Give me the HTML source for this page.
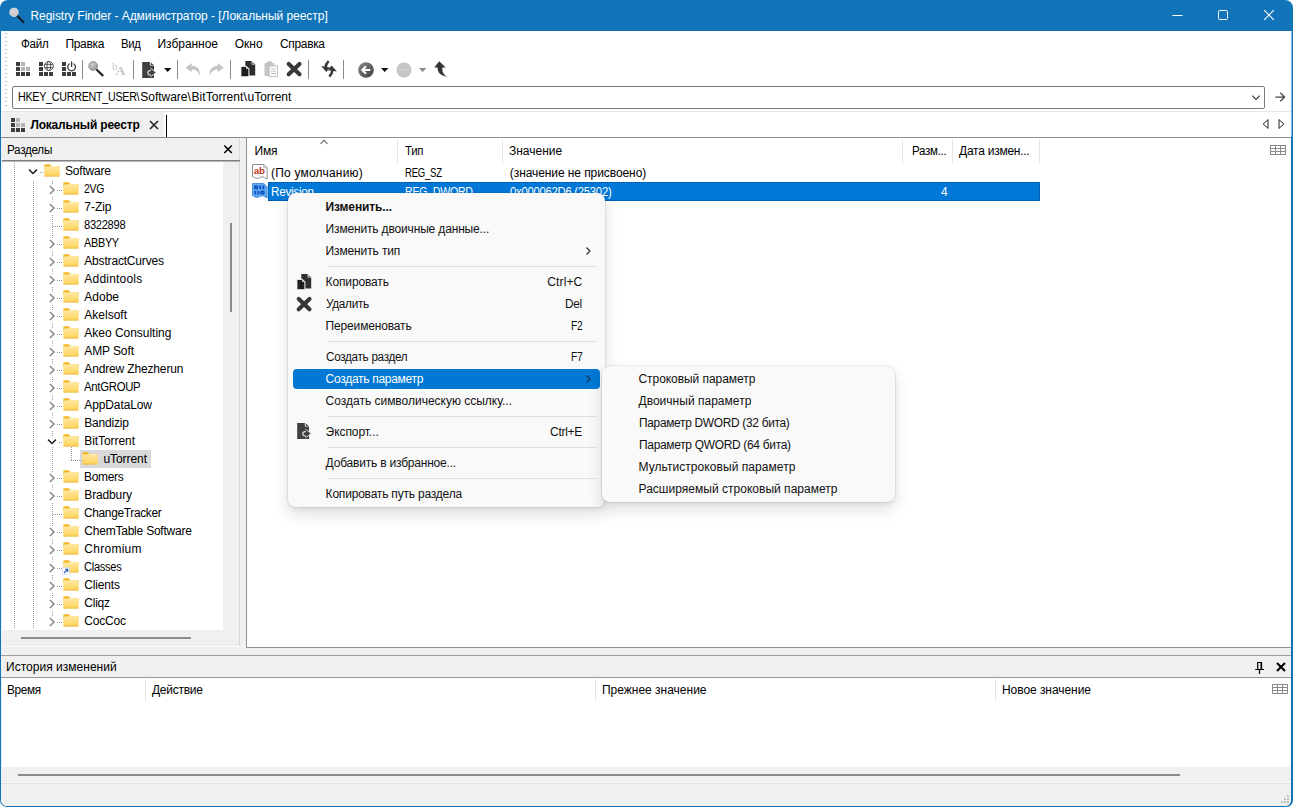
<!DOCTYPE html>
<html lang="ru"><head><meta charset="utf-8"><title>Registry Finder</title>
<style>
html,body{margin:0;padding:0;background:#fff;overflow:hidden}
#w{position:relative;width:1293px;height:807px;overflow:hidden;font-family:"Liberation Sans",sans-serif;font-size:12px;line-height:14px;color:#000}
#w div,#w svg,#w span{position:absolute;display:block}
#w span{white-space:pre;transform-origin:0 0}
#w svg{overflow:visible}
.ly{left:0;top:0;width:1293px;height:807px}
</style></head>
<body><div id="w">
<div class="ly">
<svg width="0" height="0" style="left:0;top:0"><defs><radialGradient id="gl" cx="45%" cy="40%" r="60%"><stop offset="0" stop-color="#e4dcdf"/><stop offset="1" stop-color="#c3bcc2"/></radialGradient><linearGradient id="fg" x1="0" y1="0" x2="0" y2="1"><stop offset="0" stop-color="#ffe9a6"/><stop offset="1" stop-color="#ffd257"/></linearGradient><linearGradient id="bk" x1="0" y1="0" x2="1" y2="1"><stop offset="0" stop-color="#8a8a8a"/><stop offset="1" stop-color="#3e3e3e"/></linearGradient><radialGradient id="mg" cx="40%" cy="35%" r="65%"><stop offset="0" stop-color="#cfcfcf"/><stop offset="1" stop-color="#9a9a9a"/></radialGradient><g id="fo"><path d="M0.3 1.2a1 1 0 0 1 1-1h4.6l1.6 1.9h7.4a0.8 0.8 0 0 1 .8.8v2H0.3z" fill="#f2b52a"/><path d="M0.3 3.4a0.8 0.8 0 0 1 .8-.8h4.2l1.9-.6h7.7a0.8 0.8 0 0 1 .8.8v8.9a0.8 0.8 0 0 1-.8.8H1.1a0.8 0.8 0 0 1-.8-.8z" fill="url(#fg)"/><path d="M0.5 12.1h15" stroke="#e9b94c" stroke-width="0.8"/></g></defs></svg>
<div style="left:0px;top:0px;width:1293px;height:807px;background:#1174b8;border-radius:8px 8px 7px 7px"></div>
<div style="left:1px;top:31px;width:1290px;height:775px;background:#fff;border-radius:0 0 6px 6px"></div>
<div style="left:1px;top:138px;width:1290px;height:668px;background:#f0f0f0;border-radius:0 0 6px 6px"></div>
<div style="left:1291px;top:31px;width:1px;height:106px;background:#86b6da;"></div>
<svg style="left:8px;top:7px;" width="17" height="17" viewBox="0 0 17 17"><path d="M9.5 9l6 6.2" stroke="#18222c" stroke-width="2.2" stroke-linecap="round"/><circle cx="6" cy="5.3" r="4.1" fill="url(#gl)" stroke="#eef2f6" stroke-width="0.8"/></svg>
<svg style="left:1167px;top:5px;" width="20" height="20" viewBox="0 0 20 20"><path d="M5.5 10.5h10" stroke="#fff" stroke-width="1"/></svg>
<svg style="left:1213px;top:5px;" width="20" height="20" viewBox="0 0 20 20"><rect x="5.5" y="5.5" width="9" height="9" rx="1" fill="none" stroke="#fff" stroke-width="1"/></svg>
<svg style="left:1259px;top:5px;" width="20" height="20" viewBox="0 0 20 20"><path d="M5.2 5.2l9.6 9.6M14.8 5.2l-9.6 9.6" stroke="#fff" stroke-width="1.1"/></svg>
<div style="left:5px;top:33px;width:2px;height:76px;background:repeating-linear-gradient(to bottom,#b8b8b8 0 1px,transparent 1px 4px)"></div>
<svg style="left:16px;top:62px;" width="14" height="14" viewBox="0 0 14 14"><rect x="0" y="0" width="4" height="4" fill="#3c3c3c"/><rect x="0" y="5" width="4" height="4" fill="#3c3c3c"/><rect x="0" y="10" width="4" height="4" fill="#3c3c3c"/><rect x="5" y="10" width="4" height="4" fill="#3c3c3c"/><rect x="10" y="10" width="4" height="4" fill="#3c3c3c"/><rect x="5" y="0" width="4" height="4" fill="#b4b4b4"/><rect x="5" y="5" width="4" height="4" fill="#b4b4b4"/><rect x="10" y="5" width="4" height="4" fill="#b4b4b4"/></svg>
<svg style="left:39px;top:62px;overflow:visible" width="15" height="14" viewBox="0 0 15 14"><rect x="0" y="0" width="4" height="4" fill="#3c3c3c"/><rect x="0" y="5" width="4" height="4" fill="#3c3c3c"/><rect x="0" y="10" width="4" height="4" fill="#3c3c3c"/><rect x="5" y="10" width="4" height="4" fill="#3c3c3c"/><rect x="10" y="10" width="4" height="4" fill="#3c3c3c"/><g fill="#fff" stroke="#3c3c3c" stroke-width="0.85"><circle cx="9.8" cy="4" r="4.5"/><ellipse cx="9.8" cy="4" rx="1.9" ry="4.5" fill="none"/><path d="M5.8 2.4h8M5.8 5.6h8" fill="none"/></g></svg>
<svg style="left:62px;top:62px;overflow:visible" width="15" height="14" viewBox="0 0 15 14"><rect x="0" y="0" width="4" height="4" fill="#3c3c3c"/><rect x="0" y="5" width="4" height="4" fill="#3c3c3c"/><rect x="0" y="10" width="4" height="4" fill="#3c3c3c"/><rect x="5" y="10" width="4" height="4" fill="#3c3c3c"/><rect x="10" y="10" width="4" height="4" fill="#3c3c3c"/><g fill="none" stroke="#3c3c3c" stroke-width="1.3" stroke-linecap="round"><path d="M7.2 1.9a3.9 3.9 0 1 0 4.8 0"/><path d="M9.6 -0.2v4.6"/></g></svg>
<div style="left:82px;top:60px;width:1px;height:19px;background:#8c8c8c;"></div>
<div style="left:133px;top:60px;width:1px;height:19px;background:#8c8c8c;"></div>
<div style="left:177px;top:60px;width:1px;height:19px;background:#8c8c8c;"></div>
<div style="left:230px;top:60px;width:1px;height:19px;background:#8c8c8c;"></div>
<div style="left:308px;top:60px;width:1px;height:19px;background:#8c8c8c;"></div>
<div style="left:343px;top:60px;width:1px;height:19px;background:#8c8c8c;"></div>
<svg style="left:88px;top:61px;" width="16" height="16" viewBox="0 0 16 16"><path d="M9 9l5.6 5.3" stroke="#2a2a2a" stroke-width="2.3" stroke-linecap="round"/><circle cx="5.2" cy="5" r="4.4" fill="url(#mg)" stroke="#8c8c8c" stroke-width="0.9"/></svg>
<svg style="left:112px;top:61px;" width="15" height="16" viewBox="0 0 15 16"><text x="0" y="9" font-family="Liberation Serif,serif" font-size="11" fill="#c6c6c6">b</text><text x="3.6" y="13.6" font-family="Liberation Serif,serif" font-size="13.5" font-weight="700" fill="#c6c6c6">A</text></svg>
<svg style="left:142px;top:62px;" width="14" height="16" viewBox="0 0 14 16"><path d="M0.2 0h7.8l4 3.4v12.6H0.2z" fill="#404040"/><path d="M7.9 -0.3v3.8h4.4z" fill="#fff"/><path d="M8.8 0.6v2.4h2.9z" fill="#404040"/><path d="M8.5 6.1L14.2 10.5 8.5 14.9" fill="#404040" stroke="#fff" stroke-width="0.8" stroke-linejoin="round"/><path d="M8.9 8.6c-4-.5-4.2 4.9 0 4.4" fill="none" stroke="#c9c9c9" stroke-width="1.5"/></svg>
<svg style="left:164px;top:68px;" width="8" height="4" viewBox="0 0 8 4"><path d="M0 0h7.4L3.7 3.9z" fill="#111"/></svg>
<svg style="left:185px;top:61.5px;" width="17.5" height="15" viewBox="0 0 17 14"><path d="M6.5 0.8L0.6 5.2l5.9 4.4V7c3.6-.2 6.3 1.4 7.6 5.8 1.2-5.4-2-9.3-7.6-9.4z" fill="#c4c4c4"/></svg>
<svg style="left:207px;top:61.5px;transform:scaleX(-1)" width="17.5" height="15" viewBox="0 0 17 14"><path d="M6.5 0.8L0.6 5.2l5.9 4.4V7c3.6-.2 6.3 1.4 7.6 5.8 1.2-5.4-2-9.3-7.6-9.4z" fill="#c4c4c4"/></svg>
<svg style="left:240px;top:61px;" width="15" height="16" viewBox="0 0 15 16"><path d="M5.3 0h6.4l3.5 3.4v11.1H5.3z" fill="#2e2e2e"/><path d="M11.6 -0.2v3.7h3.8z" fill="#fff"/><path d="M12.4 1.2v1.7h1.8z" fill="#2e2e2e"/><path d="M0.9 5.3h5.5l2.5 2.5v8H0.9z" fill="#1e1e1e" stroke="#fff" stroke-width="1"/><path d="M6.2 4.9v3.2h3.2z" fill="#fff"/><path d="M6.9 6.4v1.1h1.1z" fill="#1e1e1e"/></svg>
<svg style="left:264px;top:61px;" width="14" height="16" viewBox="0 0 14 16"><g fill="#c4c4c4"><rect x="0.5" y="2" width="10" height="13" rx="1"/><rect x="3" y="0.3" width="5" height="3" rx="1"/></g><rect x="5.2" y="5" width="8.3" height="10.5" fill="#fff" stroke="#c4c4c4" stroke-width="1.1"/><path d="M7 8h4.8M7 10.3h4.8M7 12.6h4.8" stroke="#c4c4c4" stroke-width="1.1"/></svg>
<svg style="left:286px;top:61px;" width="16" height="16" viewBox="0 0 16 16"><path d="M2.7 2.9l10.8 10.4M13.5 2.9l-10.8 10.4" stroke="#383838" stroke-width="4.1" stroke-linecap="round"/></svg>
<svg style="left:321px;top:61px;" width="16" height="16" viewBox="0 0 16 16"><g id="ra"><path d="M7.7 0.1c-2.2 2-3 3.9-3.1 6.2" fill="none" stroke="#383838" stroke-width="2.5"/><path d="M0.1 5.1l8.9 1.3-3.6 4.6z" fill="#383838"/></g><use href="#ra" transform="rotate(180 8 7.8)"/></svg>
<svg style="left:358px;top:62px;" width="16" height="16" viewBox="0 0 16 16"><circle cx="8" cy="8" r="7.8" fill="url(#bk)"/><path d="M12.3 8H4.6M8 4.3L4.3 8 8 11.7" fill="none" stroke="#fff" stroke-width="2"/></svg>
<svg style="left:381px;top:68px;" width="8" height="4" viewBox="0 0 8 4"><path d="M0 0h7.4L3.7 3.9z" fill="#111"/></svg>
<svg style="left:396px;top:62px;" width="16" height="16" viewBox="0 0 16 16"><circle cx="8" cy="8" r="7.6" fill="#c6c6c6"/><path d="M4 8h7" stroke="#cfcfcf" stroke-width="1.6"/></svg>
<svg style="left:418.5px;top:68px;" width="8" height="4" viewBox="0 0 8 4"><path d="M0 0h7.4L3.7 3.9z" fill="#8a8a8a"/></svg>
<svg style="left:433.5px;top:61px;" width="14" height="16" viewBox="0 0 14 16"><path d="M5.2 0.3L0.3 6.4h3.2c.2 4.6 2.4 8.2 9.9 9.3-4.2-2.2-5.4-5.2-5-9.3h3.3z" fill="#333"/></svg>
<div style="left:12px;top:86px;width:1253px;height:23px;background:#fff;border:1px solid #7a7a7a;box-sizing:border-box;border-radius:2px"></div>
<svg style="left:1250px;top:92px;" width="12" height="10" viewBox="0 0 12 10"><path d="M2.3 3.6l3.7 3.8 3.7-3.8" fill="none" stroke="#333" stroke-width="1.05"/></svg>
<svg style="left:1273.5px;top:91px;" width="12" height="12" viewBox="0 0 12 12"><path d="M1.3 6h9.2M6.3 1.7l4.3 4.3-4.3 4.3" fill="none" stroke="#444" stroke-width="1.25"/></svg>
<div style="left:1px;top:111px;width:1290px;height:1px;background:#e5e5e5;"></div>
<div style="left:2px;top:112px;width:162px;height:25px;background:#f0f0f0;"></div>
<svg style="left:11px;top:118px;" width="14" height="14" viewBox="0 0 14 14"><rect x="0" y="0" width="4" height="4" fill="#3c3c3c"/><rect x="0" y="5" width="4" height="4" fill="#3c3c3c"/><rect x="0" y="10" width="4" height="4" fill="#3c3c3c"/><rect x="5" y="10" width="4" height="4" fill="#3c3c3c"/><rect x="10" y="10" width="4" height="4" fill="#3c3c3c"/><rect x="5" y="0" width="4" height="4" fill="#b4b4b4"/><rect x="5" y="5" width="4" height="4" fill="#b4b4b4"/><rect x="10" y="5" width="4" height="4" fill="#b4b4b4"/></svg>
<svg style="left:148px;top:119px;" width="12" height="12" viewBox="0 0 12 12"><path d="M2 2l8 8M10 2l-8 8" stroke="#222" stroke-width="1.6"/></svg>
<div style="left:165.5px;top:115px;width:1.5px;height:22px;background:#000;"></div>
<svg style="left:1261px;top:117.5px;" width="10" height="12" viewBox="0 0 10 12"><path d="M7 1.6v8.8l-4.8-4.4z" fill="none" stroke="#222" stroke-width="1"/></svg>
<svg style="left:1276px;top:117.5px;" width="10" height="12" viewBox="0 0 10 12"><path d="M3 1.6v8.8l4.8-4.4z" fill="none" stroke="#222" stroke-width="1"/></svg>
<div style="left:1px;top:137px;width:1290px;height:1px;background:#8a8a8a;"></div>
<div style="left:2px;top:138px;width:237px;height:22px;background:#f0f0f0;"></div>
<div style="left:239px;top:138px;width:1px;height:509px;background:#d8d8d8;"></div>
<div style="left:2px;top:160px;width:238px;height:1px;background:#7f7f7f;"></div>
<div style="left:2px;top:161px;width:238px;height:1px;background:#b8b8b8;"></div>
<div style="left:2px;top:162px;width:221px;height:467.5px;background:#fff;"></div>
<div style="left:2px;top:646px;width:238px;height:1px;background:#fafafa;"></div>
<svg style="left:222px;top:142.5px;" width="12" height="12" viewBox="0 0 12 12"><path d="M2.3 2.5l7.5 7.5M9.8 2.5l-7.5 7.5" stroke="#000" stroke-width="1.6"/></svg>
<div style="left:230.3px;top:223px;width:2.2px;height:89px;background:#8b8b8b;"></div>
<div style="left:20.5px;top:636.5px;width:170px;height:2.2px;background:#8b8b8b;"></div>
<div style="left:14px;top:161px;width:1px;height:468px;background:repeating-linear-gradient(to bottom,#9a9a9a 0 1px,transparent 1px 2px)"></div>
<div style="left:33px;top:181px;width:1px;height:448px;background:repeating-linear-gradient(to bottom,#9a9a9a 0 1px,transparent 1px 2px)"></div>
<div style="left:52px;top:181px;width:1px;height:448px;background:repeating-linear-gradient(to bottom,#9a9a9a 0 1px,transparent 1px 2px)"></div>
<div style="left:38px;top:172px;width:6px;height:1px;background:repeating-linear-gradient(to right,#9a9a9a 0 1px,transparent 1px 2px)"></div>
<div style="left:27px;top:167px;width:12px;height:10px;background:#fff;"></div>
<svg style="left:27px;top:167px;" width="12" height="10" viewBox="0 0 12 10"><path d="M2.1 2.6l3.9 3.9 3.9-3.9" fill="none" stroke="#222" stroke-width="1.5"/></svg>
<svg style="left:44px;top:164px;" width="16" height="14" viewBox="0 0 16 14"><use href="#fo"/></svg>
<div style="left:57px;top:190px;width:6px;height:1px;background:repeating-linear-gradient(to right,#9a9a9a 0 1px,transparent 1px 2px)"></div>
<div style="left:48px;top:184px;width:9px;height:12px;background:#fff;"></div>
<svg style="left:48px;top:184px;" width="9" height="12" viewBox="0 0 9 12"><path d="M1.8 2l4.2 4-4.2 4" fill="none" stroke="#868686" stroke-width="1.5"/></svg>
<svg style="left:63px;top:182px;" width="16" height="14" viewBox="0 0 16 14"><use href="#fo"/></svg>
<div style="left:57px;top:208px;width:6px;height:1px;background:repeating-linear-gradient(to right,#9a9a9a 0 1px,transparent 1px 2px)"></div>
<div style="left:48px;top:202px;width:9px;height:12px;background:#fff;"></div>
<svg style="left:48px;top:202px;" width="9" height="12" viewBox="0 0 9 12"><path d="M1.8 2l4.2 4-4.2 4" fill="none" stroke="#868686" stroke-width="1.5"/></svg>
<svg style="left:63px;top:200px;" width="16" height="14" viewBox="0 0 16 14"><use href="#fo"/></svg>
<div style="left:53px;top:226px;width:10px;height:1px;background:repeating-linear-gradient(to right,#9a9a9a 0 1px,transparent 1px 2px)"></div>
<svg style="left:63px;top:218px;" width="16" height="14" viewBox="0 0 16 14"><use href="#fo"/></svg>
<div style="left:57px;top:244px;width:6px;height:1px;background:repeating-linear-gradient(to right,#9a9a9a 0 1px,transparent 1px 2px)"></div>
<div style="left:48px;top:238px;width:9px;height:12px;background:#fff;"></div>
<svg style="left:48px;top:238px;" width="9" height="12" viewBox="0 0 9 12"><path d="M1.8 2l4.2 4-4.2 4" fill="none" stroke="#868686" stroke-width="1.5"/></svg>
<svg style="left:63px;top:236px;" width="16" height="14" viewBox="0 0 16 14"><use href="#fo"/></svg>
<div style="left:57px;top:262px;width:6px;height:1px;background:repeating-linear-gradient(to right,#9a9a9a 0 1px,transparent 1px 2px)"></div>
<div style="left:48px;top:256px;width:9px;height:12px;background:#fff;"></div>
<svg style="left:48px;top:256px;" width="9" height="12" viewBox="0 0 9 12"><path d="M1.8 2l4.2 4-4.2 4" fill="none" stroke="#868686" stroke-width="1.5"/></svg>
<svg style="left:63px;top:254px;" width="16" height="14" viewBox="0 0 16 14"><use href="#fo"/></svg>
<div style="left:57px;top:280px;width:6px;height:1px;background:repeating-linear-gradient(to right,#9a9a9a 0 1px,transparent 1px 2px)"></div>
<div style="left:48px;top:274px;width:9px;height:12px;background:#fff;"></div>
<svg style="left:48px;top:274px;" width="9" height="12" viewBox="0 0 9 12"><path d="M1.8 2l4.2 4-4.2 4" fill="none" stroke="#868686" stroke-width="1.5"/></svg>
<svg style="left:63px;top:272px;" width="16" height="14" viewBox="0 0 16 14"><use href="#fo"/></svg>
<div style="left:57px;top:298px;width:6px;height:1px;background:repeating-linear-gradient(to right,#9a9a9a 0 1px,transparent 1px 2px)"></div>
<div style="left:48px;top:292px;width:9px;height:12px;background:#fff;"></div>
<svg style="left:48px;top:292px;" width="9" height="12" viewBox="0 0 9 12"><path d="M1.8 2l4.2 4-4.2 4" fill="none" stroke="#868686" stroke-width="1.5"/></svg>
<svg style="left:63px;top:290px;" width="16" height="14" viewBox="0 0 16 14"><use href="#fo"/></svg>
<div style="left:57px;top:316px;width:6px;height:1px;background:repeating-linear-gradient(to right,#9a9a9a 0 1px,transparent 1px 2px)"></div>
<div style="left:48px;top:310px;width:9px;height:12px;background:#fff;"></div>
<svg style="left:48px;top:310px;" width="9" height="12" viewBox="0 0 9 12"><path d="M1.8 2l4.2 4-4.2 4" fill="none" stroke="#868686" stroke-width="1.5"/></svg>
<svg style="left:63px;top:308px;" width="16" height="14" viewBox="0 0 16 14"><use href="#fo"/></svg>
<div style="left:57px;top:334px;width:6px;height:1px;background:repeating-linear-gradient(to right,#9a9a9a 0 1px,transparent 1px 2px)"></div>
<div style="left:48px;top:328px;width:9px;height:12px;background:#fff;"></div>
<svg style="left:48px;top:328px;" width="9" height="12" viewBox="0 0 9 12"><path d="M1.8 2l4.2 4-4.2 4" fill="none" stroke="#868686" stroke-width="1.5"/></svg>
<svg style="left:63px;top:326px;" width="16" height="14" viewBox="0 0 16 14"><use href="#fo"/></svg>
<div style="left:57px;top:352px;width:6px;height:1px;background:repeating-linear-gradient(to right,#9a9a9a 0 1px,transparent 1px 2px)"></div>
<div style="left:48px;top:346px;width:9px;height:12px;background:#fff;"></div>
<svg style="left:48px;top:346px;" width="9" height="12" viewBox="0 0 9 12"><path d="M1.8 2l4.2 4-4.2 4" fill="none" stroke="#868686" stroke-width="1.5"/></svg>
<svg style="left:63px;top:344px;" width="16" height="14" viewBox="0 0 16 14"><use href="#fo"/></svg>
<div style="left:57px;top:370px;width:6px;height:1px;background:repeating-linear-gradient(to right,#9a9a9a 0 1px,transparent 1px 2px)"></div>
<div style="left:48px;top:364px;width:9px;height:12px;background:#fff;"></div>
<svg style="left:48px;top:364px;" width="9" height="12" viewBox="0 0 9 12"><path d="M1.8 2l4.2 4-4.2 4" fill="none" stroke="#868686" stroke-width="1.5"/></svg>
<svg style="left:63px;top:362px;" width="16" height="14" viewBox="0 0 16 14"><use href="#fo"/></svg>
<div style="left:57px;top:388px;width:6px;height:1px;background:repeating-linear-gradient(to right,#9a9a9a 0 1px,transparent 1px 2px)"></div>
<div style="left:48px;top:382px;width:9px;height:12px;background:#fff;"></div>
<svg style="left:48px;top:382px;" width="9" height="12" viewBox="0 0 9 12"><path d="M1.8 2l4.2 4-4.2 4" fill="none" stroke="#868686" stroke-width="1.5"/></svg>
<svg style="left:63px;top:380px;" width="16" height="14" viewBox="0 0 16 14"><use href="#fo"/></svg>
<div style="left:57px;top:406px;width:6px;height:1px;background:repeating-linear-gradient(to right,#9a9a9a 0 1px,transparent 1px 2px)"></div>
<div style="left:48px;top:400px;width:9px;height:12px;background:#fff;"></div>
<svg style="left:48px;top:400px;" width="9" height="12" viewBox="0 0 9 12"><path d="M1.8 2l4.2 4-4.2 4" fill="none" stroke="#868686" stroke-width="1.5"/></svg>
<svg style="left:63px;top:398px;" width="16" height="14" viewBox="0 0 16 14"><use href="#fo"/></svg>
<div style="left:57px;top:424px;width:6px;height:1px;background:repeating-linear-gradient(to right,#9a9a9a 0 1px,transparent 1px 2px)"></div>
<div style="left:48px;top:418px;width:9px;height:12px;background:#fff;"></div>
<svg style="left:48px;top:418px;" width="9" height="12" viewBox="0 0 9 12"><path d="M1.8 2l4.2 4-4.2 4" fill="none" stroke="#868686" stroke-width="1.5"/></svg>
<svg style="left:63px;top:416px;" width="16" height="14" viewBox="0 0 16 14"><use href="#fo"/></svg>
<div style="left:57px;top:442px;width:6px;height:1px;background:repeating-linear-gradient(to right,#9a9a9a 0 1px,transparent 1px 2px)"></div>
<div style="left:46px;top:437px;width:12px;height:10px;background:#fff;"></div>
<svg style="left:46px;top:437px;" width="12" height="10" viewBox="0 0 12 10"><path d="M2.1 2.6l3.9 3.9 3.9-3.9" fill="none" stroke="#222" stroke-width="1.5"/></svg>
<svg style="left:63px;top:434px;" width="16" height="14" viewBox="0 0 16 14"><use href="#fo"/></svg>
<div style="left:80px;top:450px;width:71px;height:18px;background:#d9d9d9;"></div>
<div style="left:71px;top:447px;width:1px;height:13px;background:repeating-linear-gradient(to bottom,#9a9a9a 0 1px,transparent 1px 2px)"></div>
<div style="left:71px;top:460px;width:11px;height:1px;background:repeating-linear-gradient(to right,#9a9a9a 0 1px,transparent 1px 2px)"></div>
<svg style="left:82px;top:452px;" width="16" height="14" viewBox="0 0 16 14"><use href="#fo"/></svg>
<div style="left:57px;top:478px;width:6px;height:1px;background:repeating-linear-gradient(to right,#9a9a9a 0 1px,transparent 1px 2px)"></div>
<div style="left:48px;top:472px;width:9px;height:12px;background:#fff;"></div>
<svg style="left:48px;top:472px;" width="9" height="12" viewBox="0 0 9 12"><path d="M1.8 2l4.2 4-4.2 4" fill="none" stroke="#868686" stroke-width="1.5"/></svg>
<svg style="left:63px;top:470px;" width="16" height="14" viewBox="0 0 16 14"><use href="#fo"/></svg>
<div style="left:57px;top:496px;width:6px;height:1px;background:repeating-linear-gradient(to right,#9a9a9a 0 1px,transparent 1px 2px)"></div>
<div style="left:48px;top:490px;width:9px;height:12px;background:#fff;"></div>
<svg style="left:48px;top:490px;" width="9" height="12" viewBox="0 0 9 12"><path d="M1.8 2l4.2 4-4.2 4" fill="none" stroke="#868686" stroke-width="1.5"/></svg>
<svg style="left:63px;top:488px;" width="16" height="14" viewBox="0 0 16 14"><use href="#fo"/></svg>
<div style="left:53px;top:514px;width:10px;height:1px;background:repeating-linear-gradient(to right,#9a9a9a 0 1px,transparent 1px 2px)"></div>
<svg style="left:63px;top:506px;" width="16" height="14" viewBox="0 0 16 14"><use href="#fo"/></svg>
<div style="left:57px;top:532px;width:6px;height:1px;background:repeating-linear-gradient(to right,#9a9a9a 0 1px,transparent 1px 2px)"></div>
<div style="left:48px;top:526px;width:9px;height:12px;background:#fff;"></div>
<svg style="left:48px;top:526px;" width="9" height="12" viewBox="0 0 9 12"><path d="M1.8 2l4.2 4-4.2 4" fill="none" stroke="#868686" stroke-width="1.5"/></svg>
<svg style="left:63px;top:524px;" width="16" height="14" viewBox="0 0 16 14"><use href="#fo"/></svg>
<div style="left:57px;top:550px;width:6px;height:1px;background:repeating-linear-gradient(to right,#9a9a9a 0 1px,transparent 1px 2px)"></div>
<div style="left:48px;top:544px;width:9px;height:12px;background:#fff;"></div>
<svg style="left:48px;top:544px;" width="9" height="12" viewBox="0 0 9 12"><path d="M1.8 2l4.2 4-4.2 4" fill="none" stroke="#868686" stroke-width="1.5"/></svg>
<svg style="left:63px;top:542px;" width="16" height="14" viewBox="0 0 16 14"><use href="#fo"/></svg>
<div style="left:57px;top:568px;width:6px;height:1px;background:repeating-linear-gradient(to right,#9a9a9a 0 1px,transparent 1px 2px)"></div>
<div style="left:48px;top:562px;width:9px;height:12px;background:#fff;"></div>
<svg style="left:48px;top:562px;" width="9" height="12" viewBox="0 0 9 12"><path d="M1.8 2l4.2 4-4.2 4" fill="none" stroke="#868686" stroke-width="1.5"/></svg>
<svg style="left:63px;top:560px;" width="16" height="14" viewBox="0 0 16 14"><use href="#fo"/></svg>
<svg style="left:62px;top:567px;" width="8" height="8" viewBox="0 0 8 8"><rect x="0.5" y="0.5" width="7" height="7" fill="#fff" stroke="#c8d8ee" stroke-width="0.6"/><path d="M2 6l3.5-3.5M3 2.3h2.7v2.7" fill="none" stroke="#1a5fc0" stroke-width="1.1"/></svg>
<div style="left:57px;top:586px;width:6px;height:1px;background:repeating-linear-gradient(to right,#9a9a9a 0 1px,transparent 1px 2px)"></div>
<div style="left:48px;top:580px;width:9px;height:12px;background:#fff;"></div>
<svg style="left:48px;top:580px;" width="9" height="12" viewBox="0 0 9 12"><path d="M1.8 2l4.2 4-4.2 4" fill="none" stroke="#868686" stroke-width="1.5"/></svg>
<svg style="left:63px;top:578px;" width="16" height="14" viewBox="0 0 16 14"><use href="#fo"/></svg>
<div style="left:57px;top:604px;width:6px;height:1px;background:repeating-linear-gradient(to right,#9a9a9a 0 1px,transparent 1px 2px)"></div>
<div style="left:48px;top:598px;width:9px;height:12px;background:#fff;"></div>
<svg style="left:48px;top:598px;" width="9" height="12" viewBox="0 0 9 12"><path d="M1.8 2l4.2 4-4.2 4" fill="none" stroke="#868686" stroke-width="1.5"/></svg>
<svg style="left:63px;top:596px;" width="16" height="14" viewBox="0 0 16 14"><use href="#fo"/></svg>
<div style="left:57px;top:622px;width:6px;height:1px;background:repeating-linear-gradient(to right,#9a9a9a 0 1px,transparent 1px 2px)"></div>
<div style="left:48px;top:616px;width:9px;height:12px;background:#fff;"></div>
<svg style="left:48px;top:616px;" width="9" height="12" viewBox="0 0 9 12"><path d="M1.8 2l4.2 4-4.2 4" fill="none" stroke="#868686" stroke-width="1.5"/></svg>
<svg style="left:63px;top:614px;" width="16" height="14" viewBox="0 0 16 14"><use href="#fo"/></svg>
<div style="left:246px;top:137px;width:1045px;height:511px;background:#fff;border:1px solid #909090;border-right:none;box-sizing:border-box"></div>
<div style="left:397px;top:139px;width:1px;height:25px;background:#e8e8e8;"></div>
<div style="left:502px;top:139px;width:1px;height:25px;background:#e8e8e8;"></div>
<div style="left:902px;top:139px;width:1px;height:25px;background:#e8e8e8;"></div>
<div style="left:952px;top:139px;width:1px;height:25px;background:#e8e8e8;"></div>
<div style="left:1039px;top:139px;width:1px;height:25px;background:#e8e8e8;"></div>
<svg style="left:319px;top:138px;" width="10" height="7" viewBox="0 0 10 7"><path d="M1.5 5.8l3.5-3.5 3.5 3.5" fill="none" stroke="#666" stroke-width="1.1"/></svg>
<svg style="left:1270px;top:145px;" width="17" height="12" viewBox="0 0 17 12"><g fill="none" stroke="#8a8a8a" stroke-width="1"><rect x="0.5" y="0.5" width="15" height="9"/><path d="M5.5 0.5v9M10.5 0.5v9M0.5 3.5h15M0.5 6.5h15"/></g></svg>
<svg style="left:252px;top:164px;" width="16" height="16" viewBox="0 0 16 16"><path d="M0.5 0.5h11.3l3.3 3.3v11.2c-2.2 -1 -3.2 -2.2 -5 -2.2s-3 1.6 -5 1.6c-1.8 0 -2.8 -1.2 -4.6 -1.8z" fill="#fff" stroke="#8f8f8f" stroke-width="1"/><path d="M11.8 0.5v3.3h3.3" fill="none" stroke="#a0a0a0" stroke-width="0.8"/><text x="1.7" y="9.7" font-family="Liberation Sans,sans-serif" font-weight="700" font-size="8.6" fill="#c0341a" textLength="11.4" lengthAdjust="spacingAndGlyphs">ab</text></svg>
<div style="left:268px;top:182px;width:772px;height:19px;background:#0078d7;outline:1px dotted rgba(5,45,100,.55);outline-offset:-1px"></div>
<svg style="left:252px;top:183px;" width="16" height="16" viewBox="0 0 16 16"><path d="M0.5 0.5h11.3l3.3 3.3v11.2c-2.2 -1 -3.2 -2.2 -5 -2.2s-3 1.6 -5 1.6c-1.8 0 -2.8 -1.2 -4.6 -1.8z" fill="#5fa8ee" stroke="#3b8ae0" stroke-width="0.9"/><g fill="none" stroke="#0a50c0" stroke-width="1.7"><ellipse cx="4.2" cy="4.4" rx="1.5" ry="1.3"/><path d="M8.3 2.6v3.6M11.4 2.6v3.6M3.3 7.9v3.6M6.3 7.9v3.6"/><ellipse cx="10.4" cy="9.7" rx="1.5" ry="1.3"/></g></svg>
<div style="left:1px;top:655px;width:1290px;height:1px;background:#a0a0a0;"></div>
<div style="left:1px;top:677px;width:1290px;height:1px;background:#969696;"></div>
<div style="left:2px;top:678px;width:1289px;height:89px;background:#fff;"></div>
<svg style="left:1252px;top:661px;" width="13" height="14" viewBox="0 0 13 14"><path d="M5.1 1.5h5M5.7 1.5v7M3.2 8.5h8.8M7.5 9v3.9" fill="none" stroke="#000" stroke-width="1.2"/><path d="M9.3 1.5v7" stroke="#000" stroke-width="1.7"/></svg>
<svg style="left:1274.5px;top:660.5px;" width="12" height="12" viewBox="0 0 12 12"><path d="M2 2l8 8M10 2l-8 8" stroke="#000" stroke-width="2.1"/></svg>
<div style="left:145px;top:679px;width:1px;height:22px;background:#e5e5e5;"></div>
<div style="left:595px;top:679px;width:1px;height:22px;background:#e5e5e5;"></div>
<div style="left:995px;top:679px;width:1px;height:22px;background:#e5e5e5;"></div>
<svg style="left:1272px;top:684px;" width="17" height="12" viewBox="0 0 17 12"><g fill="none" stroke="#8a8a8a" stroke-width="1"><rect x="0.5" y="0.5" width="15" height="9"/><path d="M5.5 0.5v9M10.5 0.5v9M0.5 3.5h15M0.5 6.5h15"/></g></svg>
<div style="left:18px;top:773.6px;width:1162px;height:2.2px;background:#8b8b8b;"></div>
<div style="left:1px;top:782px;width:1290px;height:1px;background:#fbfbfb;"></div>
<div style="left:1px;top:783px;width:1290px;height:1px;background:#dfdfdf;"></div>
<svg style="left:1280px;top:794px;" width="11" height="11" viewBox="0 0 11 11"><g fill="#c2c2c2"><rect x="7" y="1" width="2" height="2"/><rect x="4" y="4" width="2" height="2"/><rect x="7" y="4" width="2" height="2"/><rect x="1" y="7" width="2" height="2"/><rect x="4" y="7" width="2" height="2"/><rect x="7" y="7" width="2" height="2"/></g></svg>
<span style="left:30.4px;top:9px;color:#fff;letter-spacing:-0.04px;">Registry Finder - Администратор - [Локальный реестр]</span>
<span style="left:20.6px;top:37px;letter-spacing:-0.30px;transform:scaleX(0.9680);">Файл</span>
<span style="left:65.4px;top:37px;letter-spacing:-0.29px;">Правка</span>
<span style="left:121.4px;top:37px;letter-spacing:-0.30px;transform:scaleX(0.9423);">Вид</span>
<span style="left:157.5px;top:37px;letter-spacing:-0.04px;">Избранное</span>
<span style="left:234.7px;top:37px;">Окно</span>
<span style="left:280.0px;top:37px;letter-spacing:-0.30px;transform:scaleX(0.9939);">Справка</span>
<span style="left:18.0px;top:90px;letter-spacing:-0.30px;transform:scaleX(0.8923);">HKEY_CURRENT_USER\</span>
<span style="left:140.3px;top:90px;letter-spacing:-0.03px;">Software\</span>
<span style="left:191.5px;top:90px;letter-spacing:0.06px;">BitTorrent\</span>
<span style="left:247.6px;top:90px;letter-spacing:-0.05px;">uTorrent</span>
<span style="left:30.4px;top:118px;font-weight:700;letter-spacing:-0.18px;">Локальный реестр</span>
<span style="left:7.4px;top:143px;letter-spacing:-0.30px;transform:scaleX(0.9743);">Разделы</span>
<span style="left:65.0px;top:164px;letter-spacing:-0.19px;">Software</span>
<span style="left:84.3px;top:182px;letter-spacing:-0.30px;transform:scaleX(0.8712);">2VG</span>
<span style="left:84.3px;top:200px;letter-spacing:-0.04px;">7-Zip</span>
<span style="left:84.3px;top:218px;letter-spacing:-0.30px;transform:scaleX(0.9261);">8322898</span>
<span style="left:84.3px;top:236px;letter-spacing:-0.30px;transform:scaleX(0.9039);">ABBYY</span>
<span style="left:84.3px;top:254px;letter-spacing:-0.18px;">AbstractCurves</span>
<span style="left:84.3px;top:272px;letter-spacing:0.21px;">Addintools</span>
<span style="left:84.3px;top:290px;">Adobe</span>
<span style="left:84.3px;top:308px;">Akelsoft</span>
<span style="left:84.3px;top:326px;letter-spacing:-0.02px;">Akeo Consulting</span>
<span style="left:84.3px;top:344px;letter-spacing:-0.11px;">AMP Soft</span>
<span style="left:84.3px;top:362px;letter-spacing:-0.15px;">Andrew Zhezherun</span>
<span style="left:84.3px;top:380px;letter-spacing:-0.30px;transform:scaleX(0.9463);">AntGROUP</span>
<span style="left:84.3px;top:398px;letter-spacing:-0.11px;">AppDataLow</span>
<span style="left:84.3px;top:416px;letter-spacing:-0.19px;">Bandizip</span>
<span style="left:84.3px;top:434px;letter-spacing:-0.07px;">BitTorrent</span>
<span style="left:103.5px;top:452px;letter-spacing:-0.08px;">uTorrent</span>
<span style="left:84.3px;top:470px;letter-spacing:-0.30px;transform:scaleX(0.9964);">Bomers</span>
<span style="left:84.3px;top:488px;letter-spacing:-0.14px;">Bradbury</span>
<span style="left:84.3px;top:506px;letter-spacing:-0.30px;transform:scaleX(0.9877);">ChangeTracker</span>
<span style="left:84.3px;top:524px;letter-spacing:-0.22px;">ChemTable Software</span>
<span style="left:84.3px;top:542px;letter-spacing:0.27px;">Chromium</span>
<span style="left:84.3px;top:560px;letter-spacing:-0.30px;transform:scaleX(0.9220);">Classes</span>
<span style="left:84.3px;top:578px;letter-spacing:-0.16px;">Clients</span>
<span style="left:84.3px;top:596px;letter-spacing:-0.24px;">Cliqz</span>
<span style="left:84.3px;top:614px;letter-spacing:-0.20px;">CocCoc</span>
<span style="left:254.4px;top:144px;letter-spacing:-0.09px;">Имя</span>
<span style="left:405.0px;top:144px;letter-spacing:-0.30px;transform:scaleX(0.9528);">Тип</span>
<span style="left:508.9px;top:144px;letter-spacing:0.01px;">Значение</span>
<span style="left:911.7px;top:144px;letter-spacing:-0.30px;transform:scaleX(0.9611);">Разм...</span>
<span style="left:959.1px;top:144px;letter-spacing:-0.26px;">Дата измен...</span>
<span style="left:271.0px;top:166px;letter-spacing:0.20px;">(По умолчанию)</span>
<span style="left:405.0px;top:166px;letter-spacing:-0.30px;transform:scaleX(0.7954);">REG_SZ</span>
<span style="left:509.8px;top:166px;letter-spacing:-0.08px;">(значение не присвоено)</span>
<span style="left:271.0px;top:185px;color:#fff;letter-spacing:-0.30px;transform:scaleX(0.9788);">Revision</span>
<span style="left:405.0px;top:185px;color:#fff;letter-spacing:-0.30px;transform:scaleX(0.8838);">REG_DWORD</span>
<span style="left:509.8px;top:185px;color:#fff;letter-spacing:-0.30px;transform:scaleX(0.9446);">0x000062D6 (25302)</span>
<span style="left:941.0px;top:185px;color:#fff;">4</span>
<span style="left:6.0px;top:660px;letter-spacing:0.02px;">История изменений</span>
<span style="left:7.3px;top:683px;letter-spacing:-0.30px;transform:scaleX(0.9797);">Время</span>
<span style="left:151.9px;top:683px;letter-spacing:-0.24px;">Действие</span>
<span style="left:602.0px;top:683px;letter-spacing:-0.01px;">Прежнее значение</span>
<span style="left:1002.0px;top:683px;letter-spacing:-0.06px;">Новое значение</span>
</div>
<div class="ly">
<div style="left:287.5px;top:193px;width:317.5px;height:314px;background:#f9f9f9;border-radius:8px;box-shadow:0 0 0 1px rgba(0,0,0,.06),0 8px 16px rgba(0,0,0,.12),0 2px 5px rgba(0,0,0,.07)"></div>
<svg style="left:584px;top:246px;" width="9" height="10" viewBox="0 0 9 10"><path d="M2.5 1.5l3.5 3.5-3.5 3.5" fill="none" stroke="#333" stroke-width="1.25"/></svg>
<div style="left:328px;top:266px;width:269px;height:1px;background:#e0e0e0;"></div>
<svg style="left:296px;top:274px;overflow:visible" width="16" height="16" viewBox="0 0 16 16"><path d="M5.3 0h6.4l3.5 3.4v11.1H5.3z" fill="#2e2e2e"/><path d="M11.6 -0.2v3.7h3.8z" fill="#fff"/><path d="M12.4 1.2v1.7h1.8z" fill="#2e2e2e"/><path d="M0.9 5.3h5.5l2.5 2.5v8H0.9z" fill="#1e1e1e" stroke="#fff" stroke-width="1"/><path d="M6.2 4.9v3.2h3.2z" fill="#fff"/><path d="M6.9 6.4v1.1h1.1z" fill="#1e1e1e"/></svg>
<svg style="left:296px;top:296px;" width="16" height="16" viewBox="0 0 16 16"><path d="M2.7 2.9l10.8 10.4M13.5 2.9l-10.8 10.4" stroke="#383838" stroke-width="4.1" stroke-linecap="round"/></svg>
<div style="left:328px;top:341px;width:269px;height:1px;background:#e0e0e0;"></div>
<div style="left:293px;top:369px;width:307px;height:20px;background:#0078d4;border-radius:4px"></div>
<svg style="left:584px;top:374px;" width="9" height="10" viewBox="0 0 9 10"><path d="M2.5 1.5l3.5 3.5-3.5 3.5" fill="none" stroke="#12305a" stroke-width="1.25"/></svg>
<div style="left:328px;top:416px;width:269px;height:1px;background:#e0e0e0;"></div>
<svg style="left:297px;top:423px;overflow:visible" width="14" height="16" viewBox="0 0 14 16"><path d="M0.2 0h7.8l4 3.4v12.6H0.2z" fill="#404040"/><path d="M7.9 -0.3v3.8h4.4z" fill="#fff"/><path d="M8.8 0.6v2.4h2.9z" fill="#404040"/><path d="M8.5 6.1L14.2 10.5 8.5 14.9" fill="#404040" stroke="#fff" stroke-width="0.8" stroke-linejoin="round"/><path d="M8.9 8.6c-4-.5-4.2 4.9 0 4.4" fill="none" stroke="#c9c9c9" stroke-width="1.5"/></svg>
<div style="left:328px;top:447px;width:269px;height:1px;background:#e0e0e0;"></div>
<div style="left:328px;top:478px;width:269px;height:1px;background:#e0e0e0;"></div>
<span style="left:325.6px;top:200px;font-weight:700;color:#111;letter-spacing:-0.13px;">Изменить...</span>
<span style="left:325.6px;top:222px;color:#111;letter-spacing:-0.16px;">Изменить двоичные данные...</span>
<span style="left:325.6px;top:244px;color:#111;letter-spacing:-0.13px;">Изменить тип</span>
<span style="left:325.6px;top:275px;color:#111;letter-spacing:-0.14px;">Копировать</span>
<span style="left:547.2px;top:275px;color:#111;letter-spacing:0.15px;">Ctrl+C</span>
<span style="left:325.6px;top:297px;color:#111;letter-spacing:-0.30px;transform:scaleX(0.9812);">Удалить</span>
<span style="left:565.3px;top:297px;color:#111;letter-spacing:-0.30px;transform:scaleX(0.9761);">Del</span>
<span style="left:325.6px;top:319px;color:#111;letter-spacing:-0.16px;">Переименовать</span>
<span style="left:570.6px;top:319px;color:#111;letter-spacing:-0.30px;transform:scaleX(0.8530);">F2</span>
<span style="left:325.6px;top:350px;color:#111;letter-spacing:-0.30px;transform:scaleX(0.9753);">Создать раздел</span>
<span style="left:570.5px;top:350px;color:#111;letter-spacing:-0.30px;transform:scaleX(0.8603);">F7</span>
<span style="left:325.6px;top:372px;color:#fff;letter-spacing:-0.29px;">Создать параметр</span>
<span style="left:325.6px;top:394px;color:#111;letter-spacing:-0.01px;">Создать символическую ссылку...</span>
<span style="left:325.6px;top:425px;color:#111;letter-spacing:-0.07px;">Экспорт...</span>
<span style="left:550.0px;top:425px;color:#111;letter-spacing:-0.28px;">Ctrl+E</span>
<span style="left:325.6px;top:456px;color:#111;letter-spacing:-0.20px;">Добавить в избранное...</span>
<span style="left:325.6px;top:487px;color:#111;letter-spacing:-0.20px;">Копировать путь раздела</span>
</div>
<div class="ly">
<div style="left:601.5px;top:365.5px;width:293.5px;height:136px;background:#f9f9f9;border-radius:8px;box-shadow:0 0 0 1px rgba(0,0,0,.06),0 8px 16px rgba(0,0,0,.12),0 2px 5px rgba(0,0,0,.07)"></div>
<span style="left:638.5px;top:372px;color:#111;letter-spacing:-0.06px;">Строковый параметр</span>
<span style="left:638.5px;top:394px;color:#111;letter-spacing:0.02px;">Двоичный параметр</span>
<span style="left:638.5px;top:416px;color:#111;letter-spacing:-0.30px;transform:scaleX(0.9918);">Параметр DWORD (32 бита)</span>
<span style="left:638.5px;top:438px;color:#111;letter-spacing:-0.30px;transform:scaleX(0.9953);">Параметр QWORD (64 бита)</span>
<span style="left:638.5px;top:460px;color:#111;letter-spacing:0.06px;">Мультистроковый параметр</span>
<span style="left:638.5px;top:482px;color:#111;letter-spacing:0.02px;">Расширяемый строковый параметр</span>
</div>
</div></body></html>
